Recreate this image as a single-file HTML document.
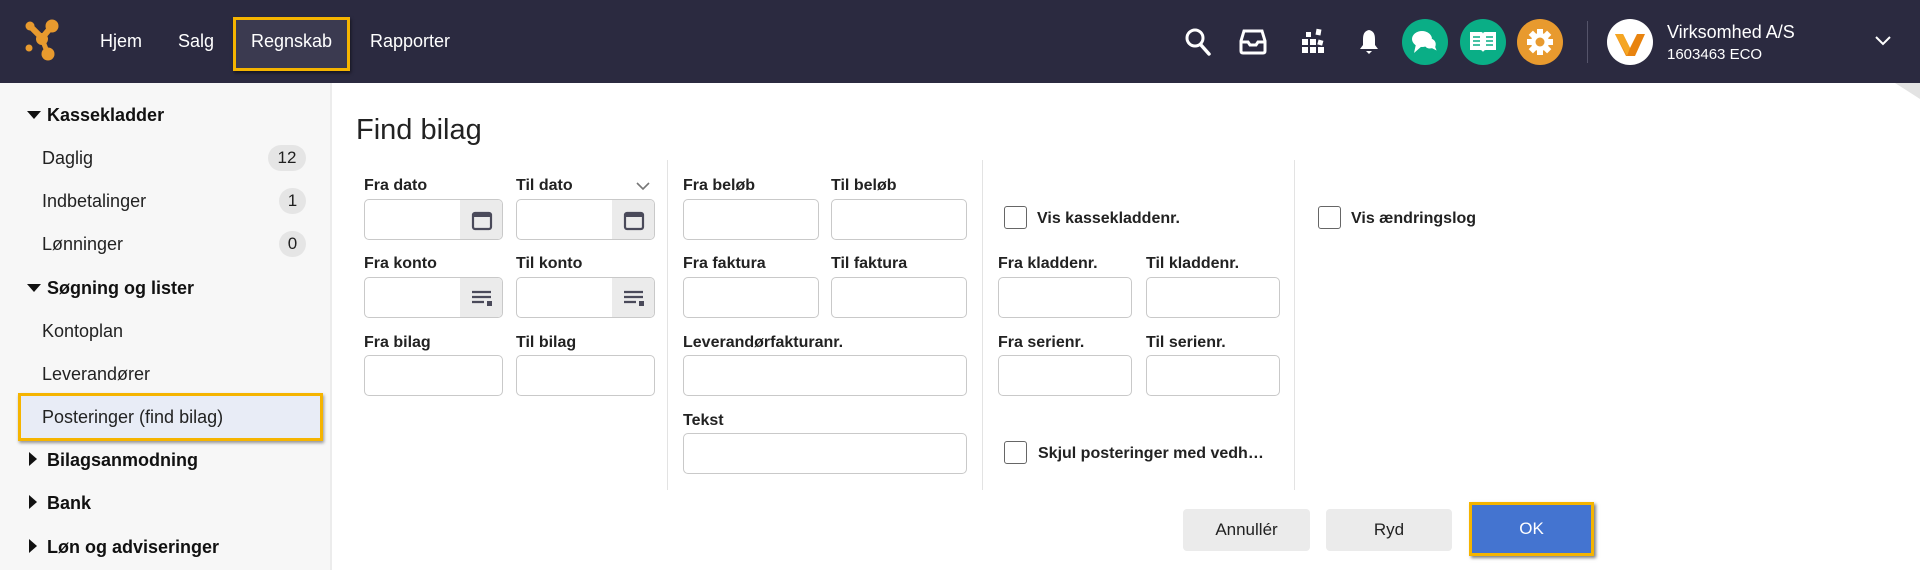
<!DOCTYPE html>
<html><head><meta charset="utf-8"><style>
*{box-sizing:border-box;margin:0;padding:0}
body{width:1920px;height:570px;overflow:hidden;background:#fff;font-family:"Liberation Sans",Arial,sans-serif;color:#1f1f1f;position:relative}
.a{position:absolute}
.hdr{left:0;top:0;width:1920px;height:83px;background:#2b2a40}
.nav{color:#fff;font-size:18px;top:31px}
.ic{top:42px;transform:translate(-50%,-50%)}
.circ{width:46px;height:46px;border-radius:50%;top:19px}
.side{left:0;top:83px;width:332px;height:487px;background:#f7f7f7;border-right:2px solid #ececec}
.si{font-size:18px;color:#222;left:42px}
.sh{font-size:18px;font-weight:bold;left:47px;color:#111}
.tri{left:27px;width:0;height:0}
.down{border-left:7px solid transparent;border-right:7px solid transparent;border-top:8px solid #111}
.right{border-top:7px solid transparent;border-bottom:7px solid transparent;border-left:8px solid #111}
.badge{background:#e5e5e5;border-radius:13px;height:26px;font-size:17px;text-align:center;line-height:26px;right:1614px}
.lbl{font-size:16px;font-weight:bold;color:#222}
.inp{border:1px solid #c9c9c9;border-radius:5px;height:41px;background:#fff}
.addon{position:absolute;right:0;top:0;width:42px;height:39px;background:#ebebeb;border-radius:0 4px 4px 0}
.vd{width:1px;background:#e3e3e3;top:160px;height:330px}
.cb{width:23px;height:23px;border:1.5px solid #666;border-radius:3px;background:#fff}
.btn{height:42px;background:#ebebeb;border-radius:4px;font-size:17px;text-align:center;line-height:42px;color:#222}
</style></head><body>
<div class="a hdr"></div>
<svg class="a" style="left:24px;top:18px" width="40" height="46" viewBox="0 0 40 46"><circle cx="6" cy="8" r="4.5" fill="#e89a2e"/><circle cx="28" cy="8" r="6.5" fill="#e89a2e"/><path d="M6 8 L18 20 L28 8" stroke="#e89a2e" stroke-width="6" fill="none"/><circle cx="18" cy="21" r="6" fill="#e89a2e"/><circle cx="5" cy="30" r="3.5" fill="#e89a2e"/><circle cx="24" cy="36" r="6.5" fill="#e89a2e"/><path d="M18 21 L24 36" stroke="#e89a2e" stroke-width="5"/></svg>
<div class="a nav" style="left:100px">Hjem</div>
<div class="a nav" style="left:178px">Salg</div>
<div class="a" style="left:233px;top:17px;width:117px;height:54px;background:#3b3a50;border:3px solid #f5b400;box-shadow:1px 2px 3px rgba(0,0,0,.5)"></div>
<div class="a nav" style="left:251px">Regnskab</div>
<div class="a nav" style="left:370px">Rapporter</div>
<svg class="a ic" style="left:1198px" width="28" height="30" viewBox="0 0 28 30"><circle cx="11" cy="11" r="8" stroke="#fff" stroke-width="3" fill="none"/><path d="M17 18 L25 27" stroke="#fff" stroke-width="3.5" stroke-linecap="round"/></svg>
<svg class="a ic" style="left:1253px" width="28" height="26" viewBox="0 0 28 26"><path d="M5 2 H23 L26 12 V22 Q26 24 24 24 H4 Q2 24 2 22 V12 Z" fill="none" stroke="#fff" stroke-width="3"/><path d="M2 13 H9 L11 16 H17 L19 13 H26" stroke="#fff" stroke-width="3" fill="none"/></svg>
<svg class="a ic" style="left:1313px" width="24" height="28" viewBox="0 0 24 28"><g fill="#fff"><rect x="1" y="19" width="6" height="6"/><rect x="9" y="19" width="6" height="6"/><rect x="17" y="19" width="6" height="6"/><rect x="1" y="11" width="6" height="6"/><rect x="9" y="11" width="6" height="6"/><rect x="17" y="12" width="5" height="5" transform="rotate(15 19 14)"/><rect x="5" y="4" width="5" height="5"/><rect x="15" y="1" width="5" height="6" transform="rotate(10 17 4)"/></g></svg>
<svg class="a ic" style="left:1369px" width="22" height="28" viewBox="0 0 22 28"><path d="M11 2 Q17 3 17 11 V17 L20 21 H2 L5 17 V11 Q5 3 11 2Z" fill="#fff"/><path d="M8 23 H14 L11 26Z" fill="#fff"/></svg>
<div class="a circ" style="left:1402px;background:#0aae86"></div>
<svg class="a ic" style="left:1425px" width="30" height="28" viewBox="0 0 30 28"><ellipse cx="12" cy="11" rx="10" ry="8" fill="#fff"/><path d="M6 16 L4 25 L12 18Z" fill="#fff"/><path d="M22 10 Q28 13 26 19 L28 24 L22 21 Q17 22 15 19" fill="#fff" stroke="#0aae86" stroke-width="1.5"/></svg>
<div class="a circ" style="left:1460px;background:#0aae86"></div>
<svg class="a ic" style="left:1483px" width="30" height="24" viewBox="0 0 30 24"><path d="M2 2 H13 Q15 2 15 4 V22 Q14 20 12 20 H2Z M28 2 H17 Q15 2 15 4 V22 Q16 20 18 20 H28Z" fill="#fff"/><g stroke="#0aae86" stroke-width="1.5"><path d="M5 7H12M5 11H12M5 15H12M18 7H25M18 11H25M18 15H25"/></g></svg>
<div class="a circ" style="left:1517px;background:#e89a2e"></div>
<svg class="a ic" style="left:1540px" width="28" height="28" viewBox="0 0 28 28"><g fill="#fff" transform="translate(14 14)"><circle r="9"/><g id="t"><rect x="-3" y="-13" width="6" height="6"/></g><use href="#t" transform="rotate(45)"/><use href="#t" transform="rotate(90)"/><use href="#t" transform="rotate(135)"/><use href="#t" transform="rotate(180)"/><use href="#t" transform="rotate(225)"/><use href="#t" transform="rotate(270)"/><use href="#t" transform="rotate(315)"/></g><circle cx="14" cy="14" r="4.5" fill="#e89a2e"/></svg>
<div class="a" style="left:1587px;top:21px;width:1px;height:42px;background:#55546a"></div>
<div class="a" style="left:1607px;top:19px;width:46px;height:46px;border-radius:50%;background:#fff"></div>
<svg class="a" style="left:1613px;top:28px" width="34" height="30" viewBox="0 0 34 30"><path d="M2 6 L10 6 L17 20 L24 6 L32 6 L22 28 L13 28 Z" fill="#e8830f"/><path d="M2 6 L10 6 L17 20 L14 28Z" fill="#f5a623"/></svg>
<div class="a" style="left:1667px;top:22px;color:#fff;font-size:18px">Virksomhed A/S</div>
<div class="a" style="left:1667px;top:46px;color:#fff;font-size:15px">1603463 ECO</div>
<svg class="a" style="left:1875px;top:36px" width="16" height="10" viewBox="0 0 16 10"><path d="M1 1 L8 8 L15 1" stroke="#fff" stroke-width="2" fill="none"/></svg>
<svg class="a" style="left:1895px;top:83px" width="25" height="16"><path d="M0 0 H25 V16Z" fill="#e3e3e3"/></svg>

<div class="a side"></div>
<div class="a tri down" style="top:111px"></div><div class="a sh" style="top:105px">Kassekladder</div>
<div class="a si" style="top:148px">Daglig</div><div class="a badge" style="left:268px;width:38px;top:145px">12</div>
<div class="a si" style="top:191px">Indbetalinger</div><div class="a badge" style="left:279px;width:27px;top:188px">1</div>
<div class="a si" style="top:234px">Lønninger</div><div class="a badge" style="left:279px;width:27px;top:231px">0</div>
<div class="a tri down" style="top:284px"></div><div class="a sh" style="top:278px">Søgning og lister</div>
<div class="a si" style="top:321px">Kontoplan</div>
<div class="a si" style="top:364px">Leverandører</div>
<div class="a" style="left:18px;top:393px;width:305px;height:48px;background:#e8ecf6;border:3px solid #f5b400;box-shadow:1px 2px 3px rgba(0,0,0,.4)"></div>
<div class="a si" style="top:407px">Posteringer (find bilag)</div>
<div class="a tri right" style="top:452px;left:29px"></div><div class="a sh" style="top:450px">Bilagsanmodning</div>
<div class="a tri right" style="top:495px;left:29px"></div><div class="a sh" style="top:493px">Bank</div>
<div class="a tri right" style="top:539px;left:29px"></div><div class="a sh" style="top:537px">Løn og adviseringer</div>

<div class="a" style="left:356px;top:114px;font-size:29px;color:#222">Find bilag</div>

<div class="a lbl" style="left:364px;top:177px">Fra dato</div>
<div class="a lbl" style="left:516px;top:177px">Til dato</div>
<svg class="a" style="left:636px;top:182px" width="14" height="9"><path d="M1 1 L7 7 L13 1" stroke="#777" stroke-width="1.6" fill="none"/></svg>
<div class="a lbl" style="left:364px;top:255px">Fra konto</div>
<div class="a lbl" style="left:516px;top:255px">Til konto</div>
<div class="a lbl" style="left:364px;top:334px">Fra bilag</div>
<div class="a lbl" style="left:516px;top:334px">Til bilag</div>
<div class="a inp" style="left:364px;top:199px;width:139px"><div class="addon"><svg style="position:absolute;left:11px;top:9px" width="22" height="22" viewBox="0 0 22 22"><rect x="2" y="4" width="18" height="16" rx="2" fill="none" stroke="#4a4a5a" stroke-width="2.2"/><rect x="2" y="4" width="18" height="4" fill="#4a4a5a"/></svg></div></div>
<div class="a inp" style="left:516px;top:199px;width:139px"><div class="addon"><svg style="position:absolute;left:11px;top:9px" width="22" height="22" viewBox="0 0 22 22"><rect x="2" y="4" width="18" height="16" rx="2" fill="none" stroke="#4a4a5a" stroke-width="2.2"/><rect x="2" y="4" width="18" height="4" fill="#4a4a5a"/></svg></div></div>
<div class="a inp" style="left:364px;top:277px;width:139px"><div class="addon"><svg style="position:absolute;left:11px;top:11px" width="22" height="18" viewBox="0 0 22 18"><path d="M1 3H20M1 8H20M1 13H13" stroke="#4a4a5a" stroke-width="2.2"/><rect x="16" y="12" width="5" height="5" fill="#4a4a5a"/></svg></div></div>
<div class="a inp" style="left:516px;top:277px;width:139px"><div class="addon"><svg style="position:absolute;left:11px;top:11px" width="22" height="18" viewBox="0 0 22 18"><path d="M1 3H20M1 8H20M1 13H13" stroke="#4a4a5a" stroke-width="2.2"/><rect x="16" y="12" width="5" height="5" fill="#4a4a5a"/></svg></div></div>
<div class="a inp" style="left:364px;top:355px;width:139px"></div>
<div class="a inp" style="left:516px;top:355px;width:139px"></div>

<div class="a vd" style="left:667px"></div>
<div class="a lbl" style="left:683px;top:177px">Fra beløb</div>
<div class="a lbl" style="left:831px;top:177px">Til beløb</div>
<div class="a inp" style="left:683px;top:199px;width:136px"></div>
<div class="a inp" style="left:831px;top:199px;width:136px"></div>
<div class="a lbl" style="left:683px;top:255px">Fra faktura</div>
<div class="a lbl" style="left:831px;top:255px">Til faktura</div>
<div class="a inp" style="left:683px;top:277px;width:136px"></div>
<div class="a inp" style="left:831px;top:277px;width:136px"></div>
<div class="a lbl" style="left:683px;top:334px">Leverandørfakturanr.</div>
<div class="a inp" style="left:683px;top:355px;width:284px"></div>
<div class="a lbl" style="left:683px;top:412px">Tekst</div>
<div class="a inp" style="left:683px;top:433px;width:284px"></div>

<div class="a vd" style="left:982px"></div>
<div class="a cb" style="left:1004px;top:206px"></div>
<div class="a lbl" style="left:1037px;top:210px">Vis kassekladdenr.</div>
<div class="a lbl" style="left:998px;top:255px">Fra kladdenr.</div>
<div class="a lbl" style="left:1146px;top:255px">Til kladdenr.</div>
<div class="a inp" style="left:998px;top:277px;width:134px"></div>
<div class="a inp" style="left:1146px;top:277px;width:134px"></div>
<div class="a lbl" style="left:998px;top:334px">Fra serienr.</div>
<div class="a lbl" style="left:1146px;top:334px">Til serienr.</div>
<div class="a inp" style="left:998px;top:355px;width:134px"></div>
<div class="a inp" style="left:1146px;top:355px;width:134px"></div>
<div class="a cb" style="left:1004px;top:441px"></div>
<div class="a lbl" style="left:1038px;top:445px">Skjul posteringer med vedh…</div>

<div class="a vd" style="left:1294px"></div>
<div class="a cb" style="left:1318px;top:206px"></div>
<div class="a lbl" style="left:1351px;top:210px">Vis ændringslog</div>

<div class="a btn" style="left:1183px;top:509px;width:127px">Annullér</div>
<div class="a btn" style="left:1326px;top:509px;width:126px">Ryd</div>
<div class="a btn" style="left:1469px;top:502px;width:125px;height:54px;line-height:48px;background:#4474d0;color:#fff;border:3px solid #f5b400;border-radius:0;box-shadow:2px 2px 3px rgba(0,0,0,.5)">OK</div>
</body></html>
